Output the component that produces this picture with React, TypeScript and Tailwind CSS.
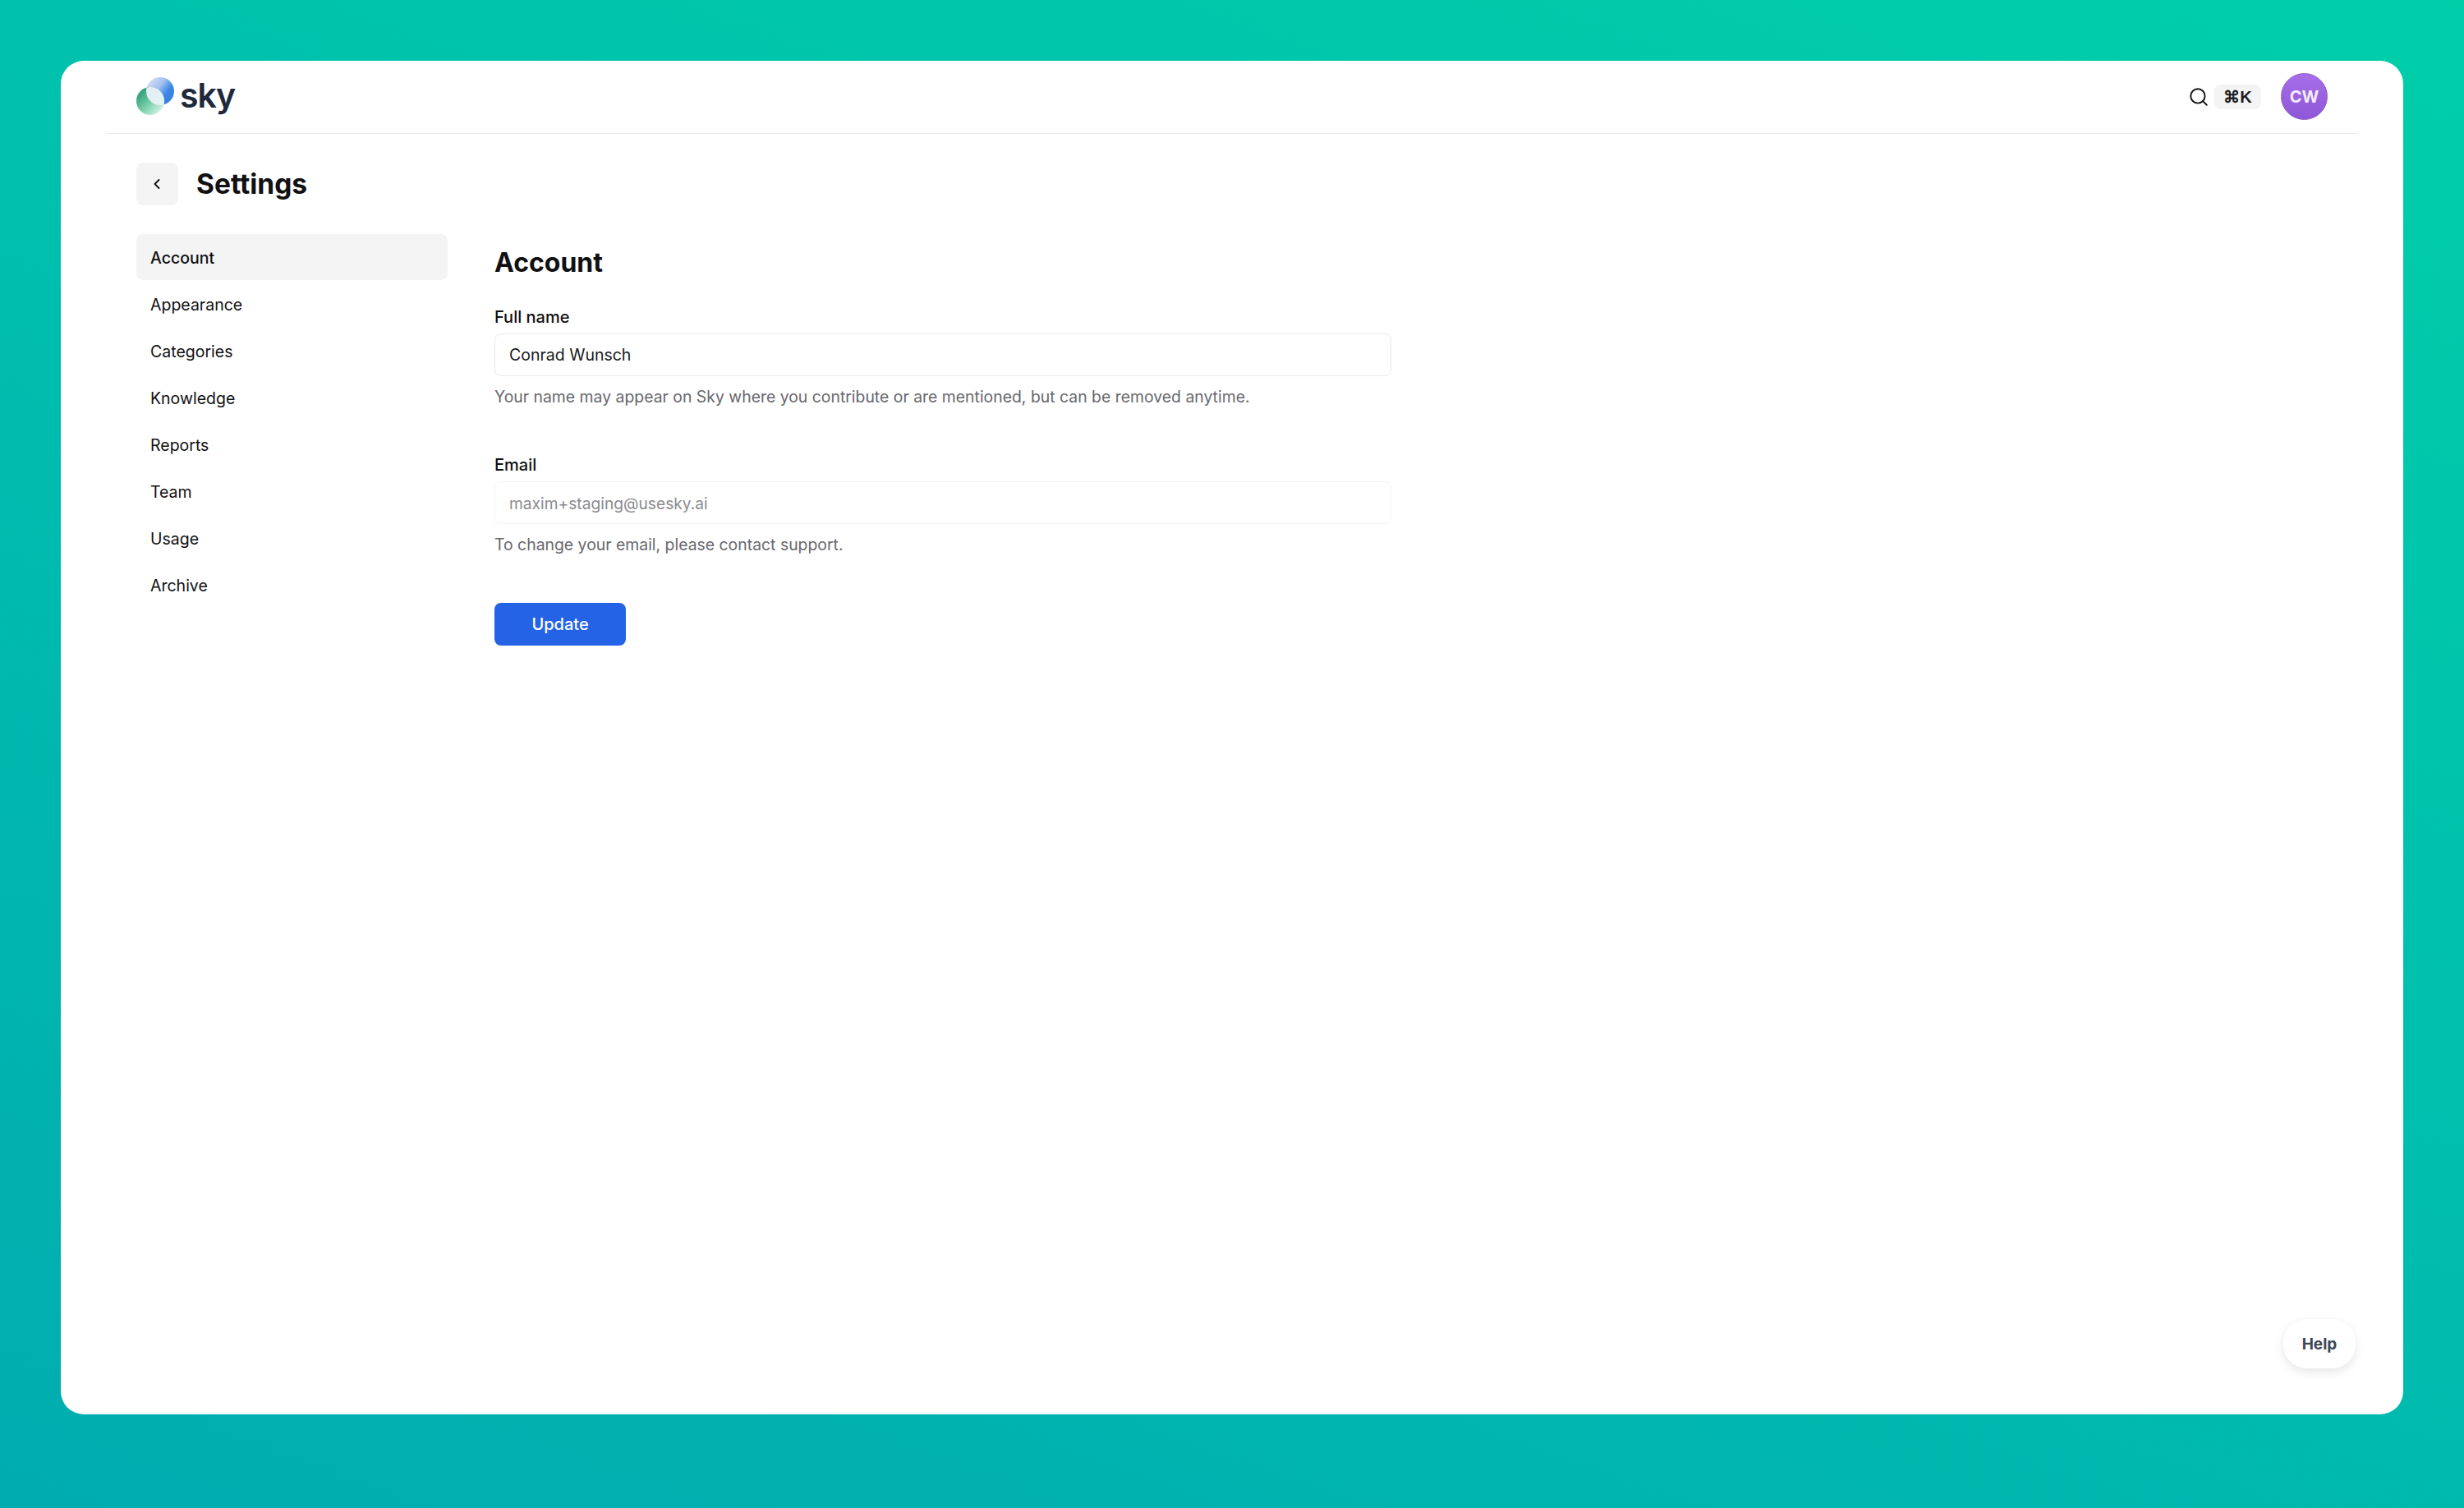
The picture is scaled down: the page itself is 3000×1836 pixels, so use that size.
import { ChevronLeft, Search } from "lucide-react";

const navItems = ["Account", "Appearance", "Categories", "Knowledge", "Reports", "Team", "Usage", "Archive"];

const SkyLogo = () => (
  <svg width="46" height="46" viewBox="0 0 46 46" className="shrink-0">
    <defs>
      <linearGradient id="blue" x1="0.1" y1="0.1" x2="0.85" y2="0.7">
        <stop offset="0" stopColor="#d5e0f4" />
        <stop offset="0.45" stopColor="#a3c1ee" />
        <stop offset="0.8" stopColor="#3f87e6" />
        <stop offset="1" stopColor="#3a82e2" />
      </linearGradient>
      <linearGradient id="green" x1="0.1" y1="0.2" x2="0.85" y2="0.9">
        <stop offset="0" stopColor="#2f9e78" />
        <stop offset="0.5" stopColor="#77cfa8" />
        <stop offset="1" stopColor="#d6f3e6" />
      </linearGradient>
      <linearGradient id="mid" x1="0.2" y1="0" x2="0.8" y2="1">
        <stop offset="0" stopColor="#e3ebf8" />
        <stop offset="1" stopColor="#e6f7ef" />
      </linearGradient>
      <clipPath id="blueClip">
        <circle cx="29" cy="17" r="17" />
      </clipPath>
    </defs>
    <circle cx="29" cy="17" r="17" fill="url(#blue)" />
    <circle cx="17" cy="29" r="17" fill="url(#green)" />
    <circle cx="17" cy="29" r="17" fill="url(#mid)" clipPath="url(#blueClip)" />
  </svg>
);

const Field = ({ label, value, hint, muted }: { label: string; value: string; hint: string; muted?: boolean }) => (
  <div className="w-[1092px]">
    <label className="block text-[20px] leading-[24px] font-medium text-[#111113]">{label}</label>
    <div
      className={`mt-[8px] flex h-[52px] items-center rounded-lg border px-[17px] pt-[2px] ${
        muted ? "border-[#f3f3f4] text-[19.2px] text-[#8a8a8f]" : "border-[#e9e9eb] text-[19.5px] text-[#1a1a1c]"
      }`}
    >
      {value}
    </div>
    <p className="mt-[13px] text-[19.4px] leading-[24px] text-[#68686e]">{hint}</p>
  </div>
);

export default function App() {
  return (
    <div
      className="h-[1836px] w-[3000px] bg-[linear-gradient(200deg,#00cea9_0%,#00bcae_55%,#00acb0_100%)] px-[74px] pt-[74px] pb-[114px]"
      style={{ fontFamily: "Inter, 'Liberation Sans', sans-serif" }}
    >
      <div className="relative flex h-full flex-col rounded-[28px] bg-white px-[56px]">
        <header className="flex h-[89px] items-center border-b border-[#e8e8ea] pr-[37px] pl-[36px]">
          <div className="mb-[2px] flex items-center gap-[7px]">
            <SkyLogo />
            <span className="mb-[2px] text-[41px] leading-[46px] font-semibold tracking-[-1px] text-[#1e293b]">sky</span>
          </div>
          <div className="mb-[1px] ml-auto flex items-center">
            <Search size={26} strokeWidth={1.75} className="ml-[1px] text-[#111113]" />
            <kbd className="ml-[6px] flex h-[30px] w-[57px] items-center justify-center rounded-lg bg-[#f4f4f5] font-['Liberation_Sans'] text-[20px] font-bold text-[#202023]">
              ⌘K
            </kbd>
            <div className="mr-[-1px] ml-[24px] flex h-[57px] w-[57px] items-center justify-center rounded-full border border-[#8b5fc0] bg-[linear-gradient(180deg,#a66ee8,#8f57d8)] text-[20px] font-bold text-[#f4edfc]">
              CW
            </div>
          </div>
        </header>

        <div className="flex items-center gap-[22px] pt-[34px] pl-[36px]">
          <button className="flex h-[52px] w-[51px] items-center justify-center rounded-lg bg-[#f4f4f5] text-[#111113]">
            <ChevronLeft size={20} strokeWidth={2.25} className="mr-[1px]" />
          </button>
          <h1 className="pt-[1px] text-[33.5px] leading-[52px] font-bold text-[#111113]">Settings</h1>
        </div>

        <div className="flex pt-[35px] pl-[36px]">
          <nav className="flex w-[379px] shrink-0 flex-col gap-px">
            {navItems.map((item, i) => (
              <div
                key={item}
                className={`flex h-[56px] items-center rounded-lg px-[17px] pt-[4px] text-[19.5px] text-[#111113] ${
                  i === 0 ? "bg-[#f4f4f5] font-medium" : ""
                }`}
              >
                {item}
              </div>
            ))}
          </nav>

          <main className="ml-[57px] flex flex-col">
            <h2 className="pt-[13px] text-[32px] leading-[44px] font-bold text-[#111113]">Account</h2>
            <div className="mt-[32px] flex flex-col gap-[59px]">
              <Field
                label="Full name"
                value="Conrad Wunsch"
                hint="Your name may appear on Sky where you contribute or are mentioned, but can be removed anytime."
              />
              <Field
                label="Email"
                value="maxim+staging@usesky.ai"
                hint="To change your email, please contact support."
                muted
              />
            </div>
            <button className="mt-[59px] h-[52px] w-[160px] rounded-lg bg-[#2563e6] text-[20px] font-medium text-white">
              Update
            </button>
          </main>
        </div>

        <button className="absolute right-[58px] bottom-[56px] h-[60px] w-[88px] rounded-[28px] bg-white pt-[2px] text-[19px] font-bold text-[#3f4653] shadow-[0_4px_12px_rgba(0,0,0,0.1)]">
          Help
        </button>
      </div>
    </div>
  );
}
